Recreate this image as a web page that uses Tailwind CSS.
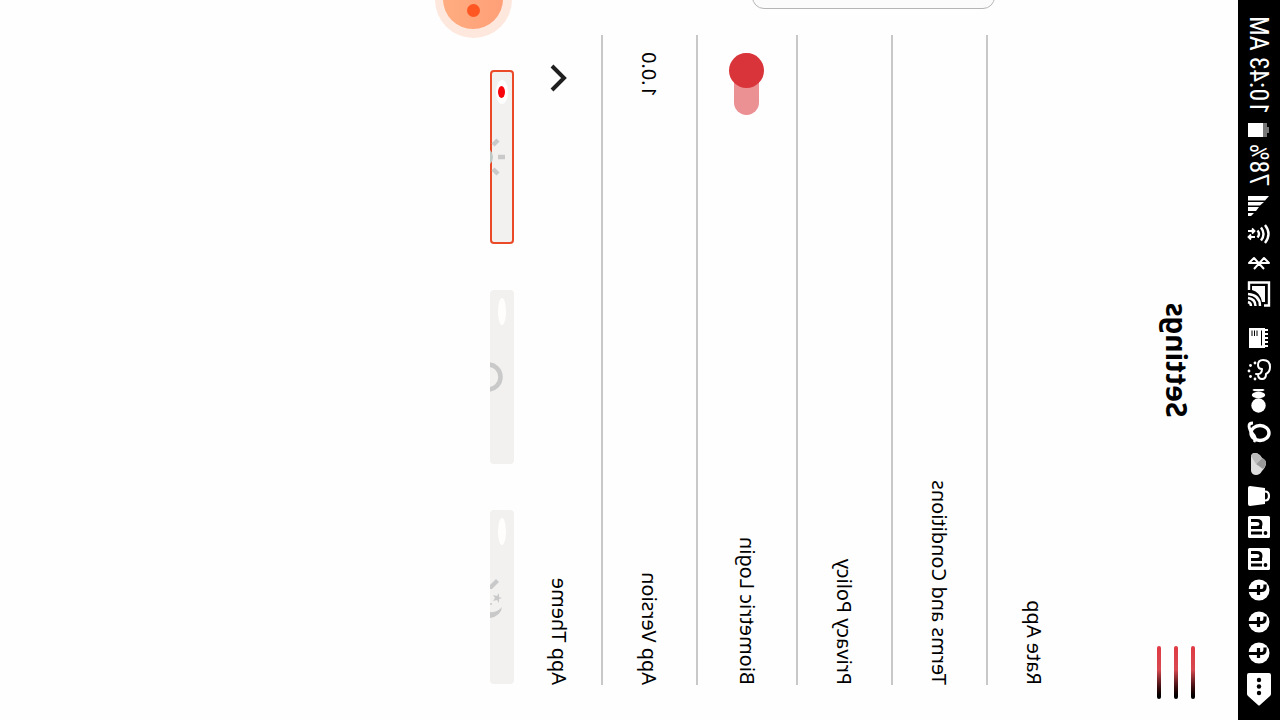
<!DOCTYPE html>
<html lang="en">
<head>
<meta charset="utf-8">
<title>Settings</title>
<script src="https://cdn.jsdelivr.net/npm/@tailwindcss/browser@4"></script>
</head>
<body class="bg-[#fefefe]">
<div class="h-screen w-full overflow-hidden">
<!-- The portrait screen is mirrored and turned on its side as one piece. -->
<div class="relative flex h-[100vw] w-[100vh] origin-top-left flex-col overflow-hidden bg-[#fefefe] font-['Noto_Sans',sans-serif] text-black [transform:translate(100vw,100vh)_matrix(0,-1,-1,0,0,0)]">

  <div class="flex h-[42px] shrink-0 items-center bg-black pr-4 pl-[14px] font-['Roboto_Condensed','Liberation_Sans_Narrow',Roboto,sans-serif] text-[26px] leading-none text-white">
    <svg class="h-6 w-[33px] shrink-0" viewBox="0 0 33 24"><path fill="#fff" d="M12 0h19q2 0 2 2v20q0 2-2 2H12q-1 0-2-1L1 13q-1-1 0-2L10 1q1-1 2-1z"/><circle cx="13" cy="12" r="2.2"/><circle cx="19.500" cy="12" r="2.200"/><circle cx="26" cy="12" r="2.200"/></svg>
    <div class="ml-2 flex flex-1 items-center justify-between">
      <svg class="size-6" viewBox="0 0 24 24"><circle cx="12" cy="12" r="10.500" fill="#fff"/><path d="M11.500 23V9.500q0-3.500 3.500-3.500h2.500M7 12.500h10" fill="none" stroke="#000" stroke-width="3.200"/></svg>
      <svg class="size-6" viewBox="0 0 24 24"><circle cx="12" cy="12" r="10.500" fill="#fff"/><path d="M11.500 23V9.500q0-3.500 3.500-3.500h2.500M7 12.500h10" fill="none" stroke="#000" stroke-width="3.200"/></svg>
      <svg class="size-6" viewBox="0 0 24 24"><circle cx="12" cy="12" r="10.500" fill="#fff"/><path d="M11.500 23V9.500q0-3.500 3.500-3.500h2.500M7 12.500h10" fill="none" stroke="#000" stroke-width="3.200"/></svg>
      <svg class="size-6" viewBox="0 0 24 24"><rect x="1" y="1" width="22" height="22" rx="1.500" fill="#fff"/><path d="M6 9v11M11.500 20V9m0 5q0-4 3.500-4t3.500 4v6" fill="none" stroke="#000" stroke-width="3"/><circle cx="6" cy="5.500" r="1.900"/></svg>
      <svg class="size-6" viewBox="0 0 24 24"><rect x="1" y="1" width="22" height="22" rx="1.500" fill="#fff"/><path d="M6 9v11M11.500 20V9m0 5q0-4 3.500-4t3.500 4v6" fill="none" stroke="#000" stroke-width="3"/><circle cx="6" cy="5.500" r="1.900"/></svg>
      <svg class="size-6" viewBox="0 0 24 24"><path fill="#fff" d="M4 6h16l2 15q0 2-2 2H4q-2 0-2-2z"/><path d="M7.500 8V6q0-4 4.500-4t4.500 4v2" fill="none" stroke="#fff" stroke-width="2.200"/></svg>
      <svg class="size-6" viewBox="0 0 24 24"><path fill="#ddd" d="M5 20q-4-1-4-5 0-4 4-6 4-4 8-4 3 0 5 4 5 3 5 7 0 4-4 4z"/><path fill="#999" d="M7 8q3-3 6-3 3 0 5 4l-6 6z"/><path fill="#bbb" d="M12 15l6-6q5 3 5 7 0 3-3 4z"/></svg>
      <svg class="size-6" viewBox="0 0 24 24"><ellipse cx="12" cy="11" rx="7.500" ry="9" fill="none" stroke="#fff" stroke-width="3.400"/><path d="M3 17q4-3 8 1t8 4q3 0 3-4" fill="none" stroke="#fff" stroke-width="2.800"/></svg>
      <svg class="size-6" viewBox="0 0 24 24"><circle cx="7.500" cy="12.500" r="7.200" fill="#fff"/><ellipse cx="18" cy="12.500" rx="3.200" ry="6.700" fill="#fff"/><ellipse cx="23" cy="12.500" rx="1.500" ry="6" fill="#fff"/></svg>
      <svg class="size-6" viewBox="0 0 24 24"><path d="M8 13q-5 0-5-4 0-4 5-4 2-4 7-4 7 0 7 7 0 5-5 5-4 0-4-4M8 15q-1-6 5-6" fill="none" stroke="#fff" stroke-width="2" stroke-linecap="round"/><g fill="#fff"><circle cx="3" cy="16" r="1.400"/><circle cx="5.500" cy="20.500" r="1.400"/><circle cx="11" cy="22" r="1.400"/><circle cx="16.500" cy="20.500" r="1.400"/><circle cx="19" cy="16" r="1.400"/></g></svg>
      <svg class="size-6" viewBox="0 0 24 24"><path fill="#fff" d="M2 6h1V3h2v3h2V3h2v3h2V3h2v3h2V3h2v3h2V3h2v3h1v16H2z"/><path d="M4.500 9.500h15M14 14h5.500M14 16.500h5.500M14 19h5.500" stroke="#000" stroke-width="1"/></svg>
    </div>
    <svg class="ml-[19px] h-6 w-[26px] shrink-0" viewBox="0 0 26 24" fill="none" stroke="#fff" stroke-width="2.400"><path d="M1.500 7V2h23v20H17"/><path fill="#fff" stroke="none" d="M5 6h16v13h-4Q15 11 5 9z"/><path d="M1 11q11 0 12 12M1 15.500q7 0 8 7.500M1 20q3 0 4 3"/></svg>
    <svg class="ml-[11px] h-6 w-[14px] shrink-0" viewBox="0 0 14 24" fill="none" stroke="#fff" stroke-width="2" stroke-linejoin="round"><path d="M1 7l11 10-5 5V2l5 5L1 17"/></svg>
    <svg class="ml-3 h-6 w-5 shrink-0" viewBox="0 0 20 24" fill="none" stroke="#fff" stroke-width="2.400"><path d="M1 6q9-7 18 0M3.500 10q6.500-5 13 0M6.500 13.500q3.500-3 7 0"/><path stroke-width="1.800" d="M7 16v7m-2.500-3L7 22.500 9.500 20M13 23v-7m-2.500 3l2.500-2.500 2.500 2.500"/></svg>
    <svg class="ml-2 h-6 w-5 shrink-0" viewBox="0 0 20 24"><path fill="#fff" d="M0 23v-3l3-3v6zM5 23v-8l4-3v11zM10.500 23V11l3.500-4v16zM15.500 23V6L20 2v21z"/></svg>
    <span class="ml-[10px] shrink-0">78%</span>
    <svg class="ml-[7px] h-6 w-[14px] shrink-0" viewBox="0 0 14 24"><path fill="#777" d="M0 4h4V2h6v2h4v5H0z"/><path fill="#fff" d="M0 8h14v15H0z"/></svg>
    <span class="ml-[9px] shrink-0 whitespace-nowrap">10:43 AM</span>
  </div>

  <header class="grid h-[158px] shrink-0 grid-cols-[1fr_auto_1fr] items-start px-[21px] pt-[43px]">
    <button type="button" aria-label="Menu" class="flex w-[53px] flex-col gap-[13px]">
      <span class="h-1 w-full rounded-full bg-linear-to-r from-black via-[#d84850] via-55% to-[#e03a45]"></span>
      <span class="h-1 w-full rounded-full bg-linear-to-r from-black via-[#d84850] via-55% to-[#e03a45]"></span>
      <span class="h-1 w-full rounded-full bg-linear-to-r from-black via-[#d84850] via-55% to-[#e03a45]"></span>
    </button>
    <h1 class="text-[28px] leading-9 font-bold">Settings</h1>
  </header>

  <main class="px-[35px] text-[20px] leading-7">
    <a href="#rate" class="flex h-[94px] items-center border-b-2 border-[#c8c8c8]">Rate App</a>
    <a href="#terms" class="flex h-[95px] items-center border-b-2 border-[#c8c8c8]">Terms and Conditions</a>
    <a href="#privacy" class="flex h-[95px] items-center border-b-2 border-[#c8c8c8]">Privacy Policy</a>
    <div class="flex h-[100px] items-center justify-between border-b-2 border-[#c8c8c8]">
      <label for="bio">Biometric Login</label>
      <input id="bio" type="checkbox" role="switch" checked class="relative mr-[18px] h-[25px] w-[62px] appearance-none rounded-full bg-[#eb9093] before:absolute before:-top-[5px] before:right-0 before:size-[35px] before:rounded-full before:bg-[#d9343a] before:content-['']">
    </div>
    <div class="flex h-[95px] items-center justify-between border-b-2 border-[#c8c8c8] pr-[17px]"><span>App Version</span><span>1.0.0</span></div>
    <button type="button" class="flex h-[87px] w-full items-center justify-between pr-[29px] pb-[3px]">
      <span>App Theme</span>
      <svg class="h-5 w-7" viewBox="0 0 28 20" fill="none" stroke="#1f1f1f" stroke-width="4"><path d="M2 17L14 5l12 12"/></svg>
    </button>
    <div class="flex gap-[46px] pl-px">
      <label class="grid h-6 w-[174px] items-center overflow-hidden rounded-sm bg-[#f2f1f0]">
        <svg class="col-start-1 row-start-1 h-6 w-11 justify-self-center" viewBox="0 0 44 24" fill="#c9c9c9"><path d="M12 12Q3 13 1 24h6q-1-7 5-12z"/><path d="M37 15l3 3-6 6h-4v-2z"/><path d="M21 12l1 3h4l-3 2 1 4-3-2-3 2 1-4-3-2h4z"/><circle cx="15" cy="23" r="1"/></svg>
        <input type="radio" name="theme" aria-label="Dark theme" class="col-start-1 row-start-1 mr-2 h-2 w-[27px] appearance-none justify-self-end rounded-[50%] bg-[#fffefc]">
      </label>
      <label class="grid h-6 w-[174px] items-center overflow-hidden rounded-sm bg-[#f2f1f0]">
        <svg class="col-start-1 row-start-1 h-6 w-11 justify-self-center" viewBox="0 0 44 24"><circle cx="22" cy="26" r="12.500" fill="none" stroke="#c9c9c9" stroke-width="4.500"/></svg>
        <input type="radio" name="theme" aria-label="System theme" class="col-start-1 row-start-1 mr-2 h-2 w-[27px] appearance-none justify-self-end rounded-[50%] bg-[#fffefc]">
      </label>
      <label class="grid h-6 w-[174px] items-center overflow-hidden rounded-sm bg-[#f2f1f0] inset-ring-2 inset-ring-[#ea4a28]">
        <svg class="col-start-1 row-start-1 h-6 w-11 justify-self-center" viewBox="0 0 44 24"><circle cx="22" cy="31" r="10" fill="#bfc8c4"/><path d="M22 9v7M10 21l-5-5M34 21l5-5" stroke="#c9c9c9" stroke-width="4.500"/></svg>
        <input type="radio" name="theme" aria-label="Light theme" checked class="col-start-1 row-start-1 mr-[10px] grid h-3 w-6 appearance-none place-items-center justify-self-end rounded-[50%] bg-white before:h-[7px] before:w-3 before:rounded-[50%] before:bg-[#f8040c] before:content-['']">
      </label>
    </div>
  </main>

  <!-- Panel and round button that stick out past the edge of the screen -->
  <div class="absolute top-[285px] -right-24 h-[243px] w-[105px] rounded-xl border border-[#b5b5b5] bg-[#fbfbfb]"></div>
  <button type="button" aria-label="Record" class="absolute top-[768px] -right-[39px] grid size-[77px] place-items-center rounded-full bg-[#fee7dc]">
    <span class="flex size-[60px] items-center rounded-full bg-linear-to-b from-[#ff9f78] to-[#ffac80] pl-3"><span class="size-[13px] rounded-full bg-[#ff5722]"></span></span>
  </button>
</div>
</div>
</body>
</html>
